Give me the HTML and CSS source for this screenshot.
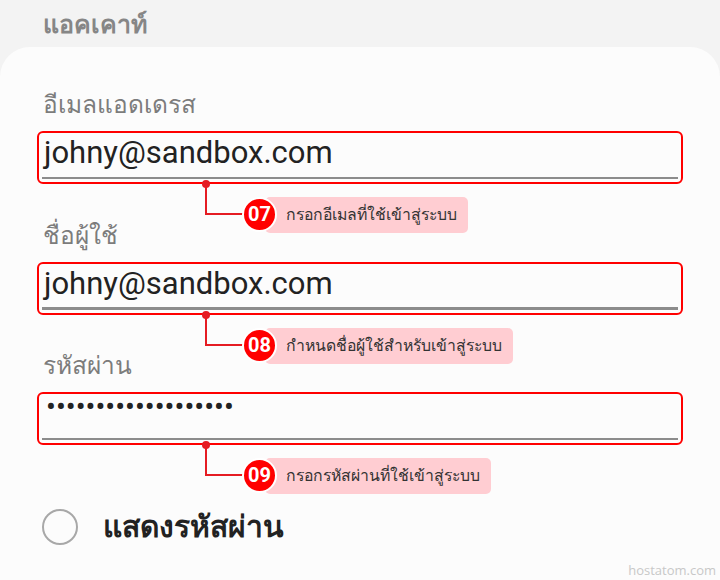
FILE: index.html
```html
<!DOCTYPE html>
<html lang="th">
<head>
<meta charset="utf-8">
<title>แอคเคาท์</title>
<link rel="stylesheet" href="styles.css">
</head>
<body>
<div class="screen">
  <div class="topbar">แอคเคาท์</div>
  <div class="card">
    <div class="field">
      <div class="label">อีเมลแอดเดรส</div>
      <div class="input">
        <div class="value">johny@sandbox.com</div>
        <div class="underline"></div>
      </div>
      <div class="callout">
        <span class="dot"></span>
        <span class="wire"></span>
        <span class="tag">กรอกอีเมลที่ใช้เข้าสู่ระบบ</span>
        <span class="num">07</span>
      </div>
    </div>
    <div class="field">
      <div class="label">ชื่อผู้ใช้</div>
      <div class="input">
        <div class="value">johny@sandbox.com</div>
        <div class="underline"></div>
      </div>
      <div class="callout">
        <span class="dot"></span>
        <span class="wire"></span>
        <span class="tag">กำหนดชื่อผู้ใช้สำหรับเข้าสู่ระบบ</span>
        <span class="num">08</span>
      </div>
    </div>
    <div class="field">
      <div class="label">รหัสผ่าน</div>
      <div class="input">
        <div class="value secret">•••••••••••••••••••</div>
        <div class="underline"></div>
      </div>
      <div class="callout">
        <span class="dot"></span>
        <span class="wire"></span>
        <span class="tag">กรอกรหัสผ่านที่ใช้เข้าสู่ระบบ</span>
        <span class="num">09</span>
      </div>
    </div>
    <div class="toggle">
      <span class="radio"></span>
      <span class="toggle-text">แสดงรหัสผ่าน</span>
    </div>
  </div>
  <div class="watermark">hostatom.com</div>
</div>
</body>
</html>
```

FILE: styles.css
```css
* { box-sizing: border-box; }
html, body {
  margin: 0;
  padding: 0;
  width: 720px;
  height: 580px;
  overflow: hidden;
  background: #f3f3f3;
  font-family: Roboto, "Noto Sans", sans-serif;
}
.screen {
  position: relative;
  width: 720px;
  height: 580px;
  display: flex;
  flex-direction: column;
}
.topbar {
  height: 47px;
  padding-left: 43px;
  font-size: 25px;
  font-weight: bold;
  color: #868686;
  line-height: 50px;
  overflow: hidden;
}
.card {
  flex: 1;
  background: #fcfcfc;
  border-radius: 30px 30px 0 0;
  padding: 40px 37px 0 37px;
}
.field {
  position: relative;
  margin-bottom: 33.5px;
}
.label {
  padding-left: 6px;
  font-size: 24.5px;
  color: #7c7c7c;
  line-height: 36px;
  height: 44px;
}
.input {
  height: 53px;
  border: 2px solid #ff0000;
  border-radius: 6px;
  padding: 0 3px 3px 3px;
  display: flex;
  flex-direction: column;
}
.value {
  flex: 1;
  padding-left: 2px;
  font-size: 31px;
  line-height: 40px;
  color: #222;
}
.value.secret {
  font-size: 29.3px;
  line-height: 26px;
  padding-left: 4px;
}
.underline {
  height: 2.5px;
  background: #8c8c8c;
}
.callout {
  position: absolute;
  left: 0;
  top: 97px;
  width: 100%;
  height: 50px;
}
.dot {
  position: absolute;
  left: 165px;
  top: -4px;
  width: 8px;
  height: 8px;
  border-radius: 50%;
  background: #e51c23;
}
.wire {
  position: absolute;
  left: 168px;
  top: 0;
  width: 40px;
  height: 31px;
  border-left: 2px solid #e51c23;
  border-bottom: 2px solid #e51c23;
}
.tag {
  position: absolute;
  left: 228px;
  top: 13px;
  height: 36px;
  padding: 0 11px 0 21px;
  background: #ffcdd2;
  border-radius: 5px;
  font-size: 15.8px;
  line-height: 36px;
  color: #333;
  white-space: nowrap;
}
.num {
  position: absolute;
  left: 205px;
  top: 13px;
  width: 35px;
  height: 35px;
  border-radius: 50%;
  background: #ff0000;
  border: 2px solid #fff;
  color: #fff;
  font-weight: bold;
  font-size: 20px;
  line-height: 31px;
  text-align: center;
}
.toggle {
  display: flex;
  align-items: center;
  gap: 25px;
  padding-left: 5px;
  margin-top: 58px;
}
.radio {
  width: 36px;
  height: 36px;
  border-radius: 50%;
  border: 2px solid #a8a8a8;
}
.toggle-text {
  font-size: 30px;
  font-weight: bold;
  color: #222;
}
.watermark {
  position: absolute;
  right: 4px;
  bottom: 1px;
  font-family: "Open Sans", sans-serif;
  font-size: 13px;
  color: #c8c8c8;
}
```
